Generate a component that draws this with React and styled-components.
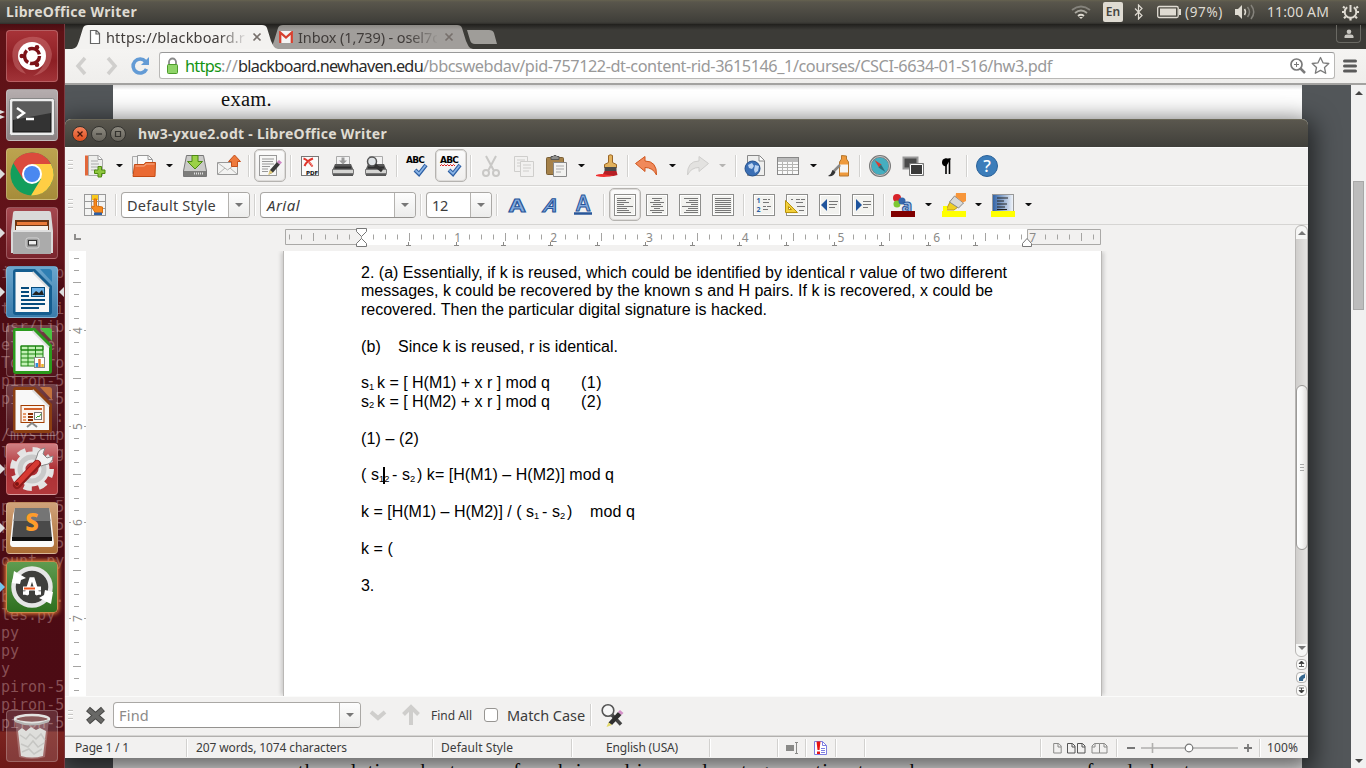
import React, { useLayoutEffect, useRef } from "react";
import styled, { createGlobalStyle, css } from "styled-components";

const GlobalStyle = createGlobalStyle`
  * { box-sizing: border-box; }
  html, body { margin: 0; padding: 0; }
  body { overflow: hidden; font-family: "Noto Sans", "Open Sans", sans-serif; color: #3c3c3c; }
  svg { display: block; flex: none; }
`;

/* Text whose tracking is adjusted so that it fills a given width. */
const FitBox = styled.span`
  display: block;
  flex: none;
  white-space: pre;
  width: ${(p) => p.$w}px;
  margin-left: ${(p) => p.$ml || 0}px;
  font-size: ${(p) => p.$size}px;
  font-weight: ${(p) => p.$weight || 400};
  font-style: ${(p) => (p.$italic ? "italic" : "normal")};
  color: ${(p) => p.$color || "inherit"};
`;
function Fit({ w, ml, size, weight, italic, color, children }) {
  const ref = useRef(null);
  useLayoutEffect(() => {
    const el = ref.current;
    el.style.letterSpacing = "0px";
    const n = el.textContent.length;
    if (n > 1) el.style.letterSpacing = `${(w - el.getBoundingClientRect().width) / n}px`;
  }, [w]);
  return (
    <FitBox $w={w} $ml={ml} $size={size} $weight={weight} $italic={italic} $color={color}>
      <span ref={ref}>{children}</span>
    </FitBox>
  );
}

/* ---------- screen ---------- */
const Screen = styled.div`
  position: relative;
  width: 1366px;
  height: 768px;
  overflow: hidden;
  display: flex;
  flex-direction: column;
  background: #3c3b37;
`;
const Panel = styled.header`
  position: relative;
  z-index: 5;
  height: 24px;
  flex: none;
  display: flex;
  align-items: center;
  padding-left: 6px;
  background: linear-gradient(#66624f 0, #59564c 2px, #3f3e39 22px, #2f2e2a 24px);
  color: #dfdbd2;
  line-height: 20px;
`;
const Tray = styled.div`
  display: flex;
  align-items: center;
  margin-left: auto;
  padding-right: 7px;
`;
const LangBadge = styled.span`
  width: 20px;
  height: 20px;
  margin: 0 11px 0 12px;
  border-radius: 2px;
  background: #dfdbd2;
  color: #45443f;
  font: 600 12px/20px "Noto Sans", sans-serif;
  text-align: center;
`;
const Body = styled.div`
  display: flex;
  flex: 1;
  min-height: 0;
`;

/* ---------- launcher ---------- */
const LauncherBar = styled.nav`
  position: relative;
  z-index: 4;
  width: 65px;
  flex: none;
  overflow: hidden;
  display: flex;
  flex-direction: column;
  gap: 7px;
  padding: 6px 0 0 6px;
  border-right: 1px solid #7b3a40;
  background: linear-gradient(#4a0d12 0, #5f1216 8px, #62131a 235px, #4d0c14 262px, #4c0b14 705px, #521016 707px, #7b231f 708px, #6d1a18 744px);
`;
const Ghost = styled.pre`
  position: absolute;
  left: 1px;
  top: 240px;
  margin: 0;
  font: 15px/18px "DejaVu Sans Mono", monospace;
  color: #885055;
`;
const Tile = styled.div`
  position: relative;
  width: 52px;
  height: 52px;
  flex: none;
  display: grid;
  place-items: center;
  border-radius: 4px;
  border: 1px solid rgba(255, 255, 255, 0.22);
  background: ${(p) => p.$bg};
  ${(p) => p.$push && css`margin-top: auto; margin-bottom: 6px;`}
  ${(p) => p.$glow && css`box-shadow: 0 0 4px 1px #e8843c; border-color: #d08a4c;`}
`;
const Pip = styled.i`
  position: absolute;
  left: ${(p) => (p.$right ? "52px" : "-7px")};
  top: ${(p) => p.$top || 20}px;
  border: solid transparent;
  border-width: ${(p) => (p.$thin ? "2px" : "5px")};
  ${(p) => (p.$right ? css`border-right-color: #ddd; border-left-width: 0;` : css`border-left: 5px solid ${p.$color || "#ddd"}; border-right-width: 0;`)}
`;

/* ---------- browser ---------- */
const Desktop = styled.main`
  position: relative;
  flex: 1;
  min-width: 0;
  display: flex;
  flex-direction: column;
`;
const TabStrip = styled.div`
  height: 25px;
  flex: none;
  display: flex;
  padding-left: 7px;
  background: linear-gradient(#201f1c, #3c3b37 6px, #3c3b37);
`;
const Tab = styled.div`
  width: 206px;
  height: 25px;
  flex: none;
  display: flex;
  align-items: center;
  padding-left: 16px;
  margin-left: ${(p) => (p.$active ? 0 : -11)}px;
  clip-path: path("M0 25 C5 24 5 22 7 17 L11 4 Q12 1 16 1 L190 1 Q194 1 195 4 L199 17 C202 23 202 24 206 25 Z");
  background: ${(p) => (p.$active ? "#f3f2f0" : "linear-gradient(#86847f, #a19e9b 6px)")};
  ${(p) => p.$active && css`position: relative; z-index: 1;`}
`;
const TabTitle = styled.div`
  width: 140px;
  margin-left: 4px;
  overflow: hidden;
  mask-image: linear-gradient(90deg, #000 112px, transparent 142px);
  color: #403c3a;
`;
const NewTab = styled.div`
  width: 30px;
  height: 14px;
  margin: 6px 0 0 -6px;
  background: #9f9d99;
  clip-path: path("M0 0 L22 0 Q26 0 27 3 L30 14 L8 14 Q4 14 3 10 Z");
`;
const UserButton = styled.div`
  width: 25px;
  height: 18px;
  margin: 1px 5px 0 auto;
  display: grid;
  place-items: center;
  border: 1px solid #6a6963;
  border-top: 0;
  border-radius: 0 0 4px 4px;
`;
const NavBar = styled.div`
  height: 36px;
  flex: none;
  display: flex;
  align-items: center;
  padding: 0 7px 1px 9px;
  background: linear-gradient(#f5f4f2, #efeeec);
  border-bottom: 2px solid #a3a2a0;
`;
const UrlBox = styled.div`
  width: 1176px;
  height: 27px;
  margin-left: 8px;
  padding: 0 5px 0 6px;
  display: flex;
  align-items: center;
  border: 1px solid #b9b8b6;
  border-top-color: #999;
  border-radius: 3px;
  background: #fff;
`;
const Viewer = styled.div`
  flex: 1;
  min-height: 0;
  display: flex;
  background: #525659;
`;
const PdfPage = styled.div`
  width: 1189px;
  margin-left: 48px;
  padding: 3px 0 0 108px;
  display: flex;
  flex-direction: column;
  justify-content: space-between;
  overflow: hidden;
  background: linear-gradient(#ddd, #fff 5px);
  font-family: "Liberation Serif", serif;
  color: #111;
  line-height: 22px;
`;
const PdfLine = styled.div`
  height: ${(p) => p.$h}px;
  padding-left: ${(p) => p.$pl || 0}px;
`;
const BrowserScroll = styled.div`
  width: 15px;
  margin-left: auto;
  padding: 6px 0 5px;
  display: flex;
  flex-direction: column;
  align-items: center;
  justify-content: space-between;
  background: #f1f1f1;
`;
const BrowserThumb = styled.div`
  width: 11px;
  height: 129px;
  margin-bottom: 363px;
  border: 1px solid #a8a8a8;
  background: #bcbcbc;
`;
const Caret = styled.i`
  border: solid transparent;
  border-width: 0 4px;
  ${(p) => (p.$up ? css`border-bottom: 4px solid ${p.$color || "#444"};` : css`border-top: 4px solid ${p.$color || "#444"};`)}
`;

/* ---------- writer window ---------- */
const Window = styled.section`
  position: absolute;
  z-index: 2;
  left: 0;
  top: 95px;
  width: 1243px;
  height: 639px;
  display: flex;
  flex-direction: column;
  border-radius: 6px 6px 0 0;
  background: #f2f1f0;
  box-shadow: 0 7px 24px 6px rgba(0, 0, 0, 0.6);
`;
const TitleBar = styled.div`
  height: 28px;
  flex: none;
  display: flex;
  align-items: center;
  padding-left: 7px;
  border-radius: 6px 6px 0 0;
  border-top: 1px solid #6a6758;
  background: linear-gradient(#5a574e, #403f3a);
  color: #dfdbd2;
`;
const WinButton = styled.span`
  width: 16px;
  height: 16px;
  margin-right: 3px;
  display: grid;
  place-items: center;
  border-radius: 50%;
  border: 1px solid #34332f;
  background: ${(p) => (p.$close ? "linear-gradient(#f4835c, #df4f1f)" : "linear-gradient(#8d8a80, #66635b)")};
`;
const Toolbar = styled.div`
  height: ${(p) => p.$h}px;
  flex: none;
  display: flex;
  align-items: center;
  padding-bottom: 2px;
  border-bottom: 1px solid #d6d5d3;
  border-top: 1px solid #fbfbfa;
`;
const Slot = styled.span`
  flex: none;
  margin-left: ${(p) => p.$ml}px;
  display: block;
`;
const Grip = styled.span`
  width: 5px;
  height: 11px;
  margin-left: 3px;
  background: repeating-linear-gradient(#c6c5c3 0 1px, #fff 1px 2px, transparent 2px 4px);
`;
const Sep = styled.span`
  width: 2px;
  height: ${(p) => p.$h || 22}px;
  flex: none;
  margin-left: ${(p) => p.$ml}px;
  border-left: 1px solid #d2d1cf;
  border-right: 1px solid #fff;
`;
const Drop = styled.i`
  flex: none;
  width: 7px;
  margin-left: ${(p) => p.$ml}px;
  border: solid transparent;
  border-width: 0 3px;
  border-top: 3px solid ${(p) => (p.$off ? "#b5b4b2" : "#111")};
`;
const Pressed = styled.span`
  width: 32px;
  height: 33px;
  flex: none;
  margin-left: ${(p) => p.$ml}px;
  display: grid;
  place-items: center;
  border: 1px solid #b5b3b0;
  border-radius: 5px;
  background: linear-gradient(#fbfbfb, #f0efee);
  box-shadow: inset 0 0 0 1px #dddbd9;
`;
const Combo = styled.div`
  width: ${(p) => p.$w}px;
  height: 26px;
  flex: none;
  margin-left: ${(p) => p.$ml}px;
  display: flex;
  align-items: center;
  padding-left: 5px;
  border: 1px solid #aaa8a5;
  border-bottom-color: #94928f;
  border-radius: 4px;
  background: #fff;
`;
const ComboButton = styled.span`
  width: 21px;
  align-self: stretch;
  margin-left: auto;
  display: grid;
  place-items: center;
  border-left: 1px solid #b4b2af;
  border-radius: 0 3px 3px 0;
  background: linear-gradient(#fdfdfd, #ececeb);
`;
const RulerRow = styled.div`
  height: 26px;
  flex: none;
  display: flex;
`;
const RulerPad = styled.div`
  padding-top: 3px;
`;
const Corner = styled.i`
  width: 7px;
  height: 6px;
  margin: 9px 0 0 9px;
  border: solid #8f8e8c;
  border-width: 0 0 2px 2px;
`;
const Workspace = styled.div`
  position: relative;
  flex: 1;
  min-height: 0;
  display: flex;
  flex-direction: column;
`;
const Canvas = styled.div`
  flex: 1;
  min-height: 0;
  display: flex;
  padding-left: 4px;
`;
const Page = styled.article`
  position: relative;
  width: 819px;
  margin-left: 197px;
  padding: 13px 0 0 77px;
  border-left: 1px solid #bab8b6;
  border-right: 1px solid #bab8b6;
  background: #fff;
  box-shadow: 3px 0 4px -1px rgba(0, 0, 0, 0.16), -3px 0 4px -1px rgba(0, 0, 0, 0.16);
  clip-path: inset(0 -6px);
  font-family: "Liberation Sans", Arial, sans-serif;
  font-size: 16px;
  color: #000;
`;
const Line = styled.div`
  height: 18.4px;
  line-height: 18.4px;
  display: flex;
  margin-bottom: ${(p) => (p.$gap ? 18.4 : 0)}px;
`;
const Sub = styled.span`
  width: ${(p) => p.$w}px;
  flex: none;
  padding-top: 3.5px;
  font-size: 9.3px;
  white-space: pre;
`;
const TextCursor = styled.i`
  position: absolute;
  left: 99px;
  top: 216px;
  width: 2px;
  height: 17px;
  background: #000;
`;
const ScrollColumn = styled.div`
  position: absolute;
  right: 0;
  top: 0;
  width: 13px;
  display: flex;
  flex-direction: column;
  align-items: center;
  gap: 2px;
`;
const ScrollTrack = styled.div`
  width: 13px;
  height: 432px;
  padding: 5px 0 6px;
  display: flex;
  flex-direction: column;
  align-items: center;
  justify-content: space-between;
  border: 1px solid #b8b6b4;
  border-radius: 6px;
  background: linear-gradient(#f6f6f5 0 13px, transparent 13px 418px, #f6f6f5 418px), linear-gradient(90deg, #cfcdcb, #e4e3e1);
`;
const ScrollThumb = styled.div`
  width: 12px;
  height: 165px;
  margin-top: 54px;
  display: grid;
  place-items: center;
  border: 1px solid #9c9a98;
  border-radius: 6px;
  background: linear-gradient(90deg, #fff, #f5f5f4 50%, #dedcda);
`;
const ThumbGrip = styled.i`
  width: 4px;
  height: 7px;
  background: repeating-linear-gradient(#aaa 0 1px, transparent 1px 3px);
`;
const RoundButton = styled.span`
  width: 11px;
  height: 11px;
  display: grid;
  place-items: center;
  border: 1px solid #b3b1af;
  border-radius: 4px;
  background: #fbfbfa;
`;
const Check = styled.span`
  width: 14px;
  height: 14px;
  margin-left: 12px;
  border: 1px solid #979592;
  border-radius: 3px;
  background: #fff;
`;
const StatusBar = styled.div`
  height: 22px;
  flex: none;
  display: flex;
  align-items: center;
  border-top: 1px solid #b2b0ae;
  color: #3c3c3c;
`;

/* ---------- drawings ---------- */
const Svg = ({ s = 24, h, vb, children }) => (
  <svg width={s} height={h || s} viewBox={vb || `0 0 ${s} ${h || s}`} fill="none">{children}</svg>
);
const Tick = () => <path d="M10 16l4 4L21 11" stroke="#2d5fa4" strokeWidth="4" />;
const TickIn = () => <path d="M10.5 16.3l3.5 3.4L20.5 11.5" stroke="#8ab4e6" strokeWidth="1.8" />;
const AbcText = styled.text`
  font: bold 9px "DejaVu Sans", sans-serif;
  letter-spacing: -0.8px;
  fill: #000;
`;
const Pencil = () => (
  <g>
    <path d="M12 16l7-8 3 2.500-7 8-4 2z" fill="#3a3a3a" />
    <path d="M12 16l-2 5 5-2.500z" fill="#e3cd7b" />
    <path d="M19 8l2-2 3 2.500-2 2z" fill="#cf86c4" />
  </g>
);
const PrinterBase = () => (
  <g>
    <path d="M5.500 2.500h13v9h-13z" fill="#f2f2f2" stroke="#aaa" />
    <path d="M4 10h16l2.500 6v5h-21v-5z" fill="#5a5a5a" />
    <path d="M1.500 15.500h21v4h-21z" fill="#d5d5d3" stroke="#777" />
    <path d="M4 13.500h16" stroke="#2f2f2f" strokeWidth="2" />
    <path d="M2 21.500h20" stroke="#555" />
  </g>
);

const icons = {
  newDoc: (
    <>
      <path d="M2 1.500h4v20H2z" fill="#e2673a" />
      <path d="M5.500 1.500h10l4 4v16h-14z" fill="#eeeeec" stroke="#aaa" />
      <path d="M15 1.500v4h4" stroke="#999" fill="#fff" />
      <path d="M8 7h7M8 10h8M8 13h7M8 16h5" stroke="#aaa" />
      <path d="M15 12.500h3.500v3.500h3.500v3.500h-3.500V23H15v-3.500h-3.500V16H15z" fill="#8ec63f" stroke="#4f8a10" />
    </>
  ),
  open: (
    <>
      <path d="M.5 2.500h7l2 3v14h-9z" fill="#efefef" stroke="#aaa" />
      <path d="M5.500 1.500h11l4 4v7h-15z" fill="#fafafa" stroke="#999" />
      <path d="M16 1.500v4h4" stroke="#999" />
      <path d="M1 22.500L2.500 10.500H12l1.500-2H23.500l-.5 14z" fill="#ea6a33" stroke="#c44b14" />
      <path d="M3.500 12h9l1.500-2h8.500" stroke="#f7b08d" />
    </>
  ),
  save: (
    <>
      <path d="M3.500 1.500h17l3 15.500v5.500h-23V17z" fill="#cbcbc9" stroke="#777" />
      <path d="M1 17h22v5H1z" fill="#7d7d7b" />
      <path d="M11 19.500h9" stroke="#e0e0e0" strokeWidth="2" strokeDasharray="1 1" />
      <path d="M9 1.500h6v6h4.500L12 15 4.500 7.500H9z" fill="#9bd146" stroke="#4c8913" />
    </>
  ),
  mail: (
    <>
      <path d="M.5 8.500h20v12h-20z" fill="#f3f3f2" stroke="#999" />
      <path d="M1 9l9.500 7L20 9M1 20l7-6M20 20l-7-6" stroke="#b5b5b3" />
      <path d="M14.500 12.500V7.500h-3l6-6.500 6 6.500h-3v5z" fill="#ee7a3d" stroke="#c4511c" />
    </>
  ),
  edit: (
    <>
      <rect x="1.500" y="1.500" width="17" height="20" fill="#f7f7f6" stroke="#999" />
      <path d="M4 5h12M4 7.500h11M4 10h12M4 12.500h8M4 15h6M4 17.500h6" stroke="#999" />
      <Pencil />
    </>
  ),
  pdf: (
    <>
      <rect x="3.500" y="2.500" width="17" height="19" fill="#fbfbfb" stroke="#777" />
      <path d="M5.500 4.500q4 1 9 8M15 4.500Q9 6.500 6.500 12" stroke="#e0352c" strokeWidth="2" />
      <path d="M10 8q4 1 4.500 5" stroke="#f08a84" />
      <text x="8" y="20.500" fontFamily="DejaVu Sans" fontWeight="bold" fontSize="5.500" fill="#111">PDF</text>
    </>
  ),
  print: (
    <>
      <PrinterBase />
      <path d="M10.500 3.500h3v3h2.500l-4 4-4-4h2.500z" fill="#9b9b9b" />
    </>
  ),
  preview: (
    <>
      <PrinterBase />
      <circle cx="8" cy="7.500" r="4.500" fill="#dfe3e6" stroke="#555" strokeWidth="1.500" />
      <path d="M11 11l7 6" stroke="#333" strokeWidth="3" />
    </>
  ),
  spell: (
    <>
      <AbcText x="1" y="9">ABC</AbcText>
      <Tick />
      <TickIn />
    </>
  ),
  autoSpell: (
    <>
      <AbcText x="1" y="9">ABC</AbcText>
      <path d="M1 12l1.500-1.500L4 12l1.500-1.500L7 12l1.500-1.500L10 12l1.500-1.500L13 12l1.500-1.500L16 12" stroke="#e02020" />
      <Tick />
      <TickIn />
    </>
  ),
  cut: (
    <g stroke="#c9c8c6" strokeWidth="2">
      <path d="M7 2l7.500 14M17 2L9.500 16" />
      <circle cx="7" cy="19" r="3" />
      <circle cx="17" cy="19" r="3" />
    </g>
  ),
  copy: (
    <g stroke="#cfcecc" fill="#f2f1f0">
      <path d="M2.500 2.500h13v15h-13zM5 6h8M5 9h8M5 12h6" />
      <path d="M8.500 7.500h13v15h-13zM11 11h8M11 14h8M11 17h6" />
    </g>
  ),
  paste: (
    <>
      <rect x="2.500" y="3.500" width="17" height="17" rx="1" fill="#a58149" stroke="#7b6036" />
      <path d="M7 5.500v-3h2l1-1h2l1 1h2v3z" fill="#8d8d8b" stroke="#555" />
      <path d="M9.500 8.500h13v14h-13z" fill="#f2f2f0" stroke="#888" />
      <path d="M12 12h8M12 15h8M12 18h5" stroke="#aaa" />
    </>
  ),
  brush: (
    <>
      <path d="M13.500 1.500q2-1.500 4 0v7l4 2v3h-12v-3l4-2z" fill="#e3b25c" stroke="#9a6526" />
      <path d="M9.500 13h12v4h-12z" fill="#4a4a4a" />
      <path d="M9.500 17h12l1 4q-8 2.500-15 0z" fill="#b51f25" />
      <path d="M1 21q5-2 12 0l6 .500Q10 24 1 22z" fill="#f03030" />
    </>
  ),
  undo: (
    <path d="M1.500 9.500L11 2.500v4.500q12 0 11.500 14Q19 13.500 11 13.500v4z" fill="#f0895a" stroke="#d0571e" strokeLinejoin="round" />
  ),
  redo: (
    <path d="M22.500 9.500L13 2.500v4.500Q1 7 1.500 21 5 13.500 13 13.500v4z" fill="#e3e2e0" stroke="#cfcecc" strokeLinejoin="round" />
  ),
  link: (
    <>
      <path d="M4.500 1.500h12l5 5v15h-17z" fill="#efefee" stroke="#888" />
      <path d="M16 2v5h5" stroke="#888" fill="#fff" />
      <circle cx="9.500" cy="14.500" r="7.500" fill="#3b6fb5" stroke="#24508c" />
      <path d="M5 11l4-2 2 3-2 3-3-1zM12 11l4 1-1 5-3 2-1-3z" fill="#bcd4f2" />
    </>
  ),
  table: (
    <>
      <rect x="1.500" y="3.500" width="21" height="17" fill="#fafafa" stroke="#888" />
      <path d="M2 6h20" stroke="#bbb" strokeWidth="4" />
      <path d="M2 10.500h20M2 13.500h20M2 16.500h20M6.500 8v12M11.500 8v12M16.500 8v12" stroke="#b5b5b3" />
    </>
  ),
  draw: (
    <>
      <path d="M14.500 1.500l5 .5v3l2 3v14h-9V8l2-3z" fill="#ef9a3c" stroke="#b5772e" />
      <path d="M13 10.500h8v8h-8z" fill="#f5f5f5" />
      <path d="M6 18l7-7" stroke="#888" strokeWidth="2.500" />
      <path d="M1 22q5 1.500 7.500-4l-3-2q-1 4-4.500 6z" fill="#333" />
    </>
  ),
  navigator: (
    <>
      <circle cx="12" cy="12" r="9.800" fill="#45aec0" stroke="#777" strokeWidth="2.400" />
      <circle cx="12" cy="12" r="9.500" stroke="#c9c9c9" strokeWidth="1" />
      <path d="M6.500 6l7 4.500-2.500 3z" fill="#dc3a30" />
      <path d="M17.500 18l-7-4.500 2.500-3z" fill="#2a6f7d" />
    </>
  ),
  gallery: (
    <>
      <path d="M2.500 3.500h14v11h-14z" fill="#4a4a4a" stroke="#999" strokeWidth="2" />
      <path d="M8.500 9.500h14v12h-14z" fill="#3a3a3a" stroke="#777" />
      <path d="M9.500 10.500h12v10h-12z" stroke="#fff" />
    </>
  ),
  pilcrow: (
    <>
      <path d="M12 4.500v15.500M15.500 4.500v15.500" stroke="#000" strokeWidth="1.600" />
      <path d="M17 4.500h-6q-3 .500-3 4t4 4z" fill="#000" />
    </>
  ),
  help: (
    <>
      <circle cx="12" cy="12" r="10.500" fill="#3c7dba" stroke="#2b6299" />
      <text x="12" y="18" textAnchor="middle" fontFamily="Noto Sans" fontWeight="500" fontSize="17" fill="#fff">?</text>
    </>
  ),
  styles: (
    <>
      <rect x="1.500" y="1.500" width="21" height="21" fill="#f4f4f3" stroke="#999" />
      <path d="M8.500 2v20M15.500 2v20M2 8.500h20M2 15.500h20" stroke="#999" />
      <path d="M9 2h6v5H9z" fill="#f8c81c" />
      <path d="M11 6h2.500v7l6 1v6h-7l-4-6 1-1 1.500 1z" fill="#f58a1f" stroke="#d96d0c" />
      <path d="M11 19.500h8v2.500h-8z" fill="#2d5fa4" />
    </>
  ),
  bold: (
    <g transform="translate(12 18.500) scale(1.3 1)">
      <text textAnchor="middle" fontFamily="Noto Sans" fontWeight="700" fontSize="18.500" fill="#85acdf" stroke="#28569a">A</text>
    </g>
  ),
  italic: (
    <g transform="translate(12 18.500) scale(1.200 1) skewX(-6)">
      <text textAnchor="middle" fontFamily="Noto Sans" fontWeight="600" fontStyle="italic" fontSize="18.500" fill="#85acdf" stroke="#28569a">A</text>
    </g>
  ),
  underline: (
    <>
      <text x="12" y="17.500" textAnchor="middle" fontFamily="Noto Sans" fontWeight="600" fontSize="21" fill="#85acdf" stroke="#28569a" strokeWidth="1">A</text>
      <path d="M3 20.500h18" stroke="#28569a" strokeWidth="2.500" />
    </>
  ),
  fontColor: (
    <>
      <circle cx="6" cy="5" r="4" fill="#d8232a" />
      <circle cx="6" cy="11" r="3.500" fill="#7dc832" />
      <circle cx="11" cy="8" r="3.500" fill="#3566ac" />
      <text x="16" y="19" textAnchor="middle" fontFamily="Noto Sans" fontWeight="800" fontSize="17" fill="#9abbe5" stroke="#28569a">a</text>
      <path d="M0 18h24v6H0z" fill="#800000" />
    </>
  ),
  highlight: (
    <>
      <path d="M4 17l4-8 8 5-4 3z" fill="#f0cf22" stroke="#bd9b10" />
      <path d="M7.500 9l5-6 9 7-5 5z" fill="#d9d9d7" stroke="#888" />
      <path d="M14 0h10v8l-3 1.500-7.500-6z" fill="#f7963b" />
      <path d="M1 13h4v5H1zM0 18h24v6H0z" fill="#ffff00" />
    </>
  ),
  paraBg: (
    <>
      <defs>
        <linearGradient id="pb"><stop stopColor="#2d5fa4" /><stop offset="1" stopColor="#f4f7fb" /></linearGradient>
      </defs>
      <rect x="1.500" y="1.500" width="21" height="20" fill="url(#pb)" stroke="#999" />
      <path d="M6 5h11M6 8h7M6 11h10M6 14h8M6 16.500h10" stroke="#222" />
      <path d="M0 18h24v6H0z" fill="#ffff00" />
    </>
  ),
  find: (
    <>
      <path d="M12 12l9 9.500" stroke="#444" strokeWidth="3.500" />
      <circle cx="8" cy="7.500" r="5.800" stroke="#555" strokeWidth="1.600" fill="#f7f7f7" />
      <path d="M8.500 19.500L18 9l3.500 3L12 22z" fill="#2f2f2f" />
      <path d="M8.500 19.500L6.500 24l5.500-2z" fill="#e3d96b" />
      <path d="M18 9l2-2 3.500 3-2 2z" fill="#d390c8" />
    </>
  ),
};

const AlignFrame = ({ d, children }) => (
  <Svg>
    <rect x="1.500" y="1.500" width="21" height="21" fill="#f2f2ef" stroke="#8e8e8c" />
    <rect x="2.500" y="2.500" width="19" height="19" stroke="#fff" />
    <path d={d} stroke="#777" />
    {children}
  </Svg>
);
const rows = (spans) => spans.map(([x, w], i) => `M${x} ${5.5 + i * 2}h${w}`).join("");
const alignLeft = rows([[4, 14], [4, 9], [4, 12], [4, 7], [4, 16], [4, 10], [4, 12], [4, 14]]);
const alignCenter = rows([[7, 10], [9, 6], [5, 14], [8, 8], [6, 12], [9, 6], [5, 14], [7, 10]]);
const alignRight = rows([[6, 14], [11, 9], [8, 12], [13, 7], [4, 16], [10, 10], [8, 12], [6, 14]]);
const alignFull = rows([[4, 16], [4, 16], [4, 16], [4, 16], [4, 16], [4, 16], [4, 16], [4, 16]]);

const Icon = ({ name, ml = 0 }) => (
  <Slot $ml={ml}><Svg>{icons[name]}</Svg></Slot>
);

/* ---------- launcher drawings ---------- */
const OfficeDoc = ({ c, c2, children }) => (
  <Svg s={42} h={50}>
    <path d="M2 5q0-3 3-3h19l17 17v26q0 3-3 3H5q-3 0-3-3z" fill={c} />
    <path d="M29 2h9q3 0 3 3v10z" fill={c2} />
    <path d="M4.500 5h17L38 21.500V45h-33.500z" fill="#f8f8f8" />
    <path d="M21.500 5L38 21.500" stroke="#ddd" strokeWidth="2" />
    {children}
  </Svg>
);
const launcherArt = {
  dash: (
    <Svg s={50}>
      <path d="M6 30Q2 10 22 6q20-2 23 17-1 18-19 22Q41 36 37 19 26 8 12 19 8 31 19 43 8 40 6 30z" fill="#d88484" opacity=".4" />
      <circle cx="25" cy="25" r="14" fill="#fff" />
      <circle cx="25" cy="25" r="7.500" stroke="#7c1218" strokeWidth="3.400" strokeDasharray="13.700 2" />
      <circle cx="14.800" cy="25" r="2.300" fill="#7c1218" />
      <circle cx="30" cy="16.300" r="2.300" fill="#7c1218" />
      <circle cx="30" cy="33.700" r="2.300" fill="#7c1218" />
    </Svg>
  ),
  terminal: (
    <Svg s={50}>
      <rect x="2.500" y="8.500" width="45" height="37" rx="2" fill="#ececec" stroke="#888" />
      <rect x="6" y="12" width="38" height="30" fill="#333" stroke="#111" />
      <path d="M6 12h38v11L6 30z" fill="#5b5b5b" />
      <path d="M10 18l7 5-7 5M19 29h8" stroke="#fff" strokeWidth="2.400" />
    </Svg>
  ),
  chrome: (
    <Svg s={50}>
      <circle cx="25" cy="25" r="21.500" fill="#129e5c" />
      <path d="M25 15h19a21.500 21.500 0 0 1-20 31.500L34 30z" fill="#ffce44" />
      <path d="M25 15h19A21.500 21.500 0 0 0 6.400 14.300L16 30z" fill="#db4a3c" />
      <circle cx="25" cy="25" r="10" fill="#fff" />
      <circle cx="25" cy="25" r="8" fill="#4a88f0" />
    </Svg>
  ),
  files: (
    <Svg s={50}>
      <path d="M6 5q0-2 2-2h34q2 0 2 2l2 18v22H4V23z" fill="#d9d9d9" />
      <path d="M8 12h34v14H8z" fill="#6b3512" />
      <path d="M10 14h30v3H10z" fill="#e97a37" />
      <path d="M9 18h32v4H9z" fill="#f5f0e8" />
      <path d="M9 22h32v3H9z" fill="#e97a37" />
      <path d="M6 22h38v24H6z" fill="#ababab" />
      <path d="M6 22h38v2H6z" fill="#dedede" />
      <rect x="19" y="30" width="13" height="10" rx="2" fill="#999" stroke="#d5d5d5" />
      <rect x="21.500" y="32.500" width="8" height="4.500" fill="#eee" stroke="#333" />
    </Svg>
  ),
  writer: (
    <OfficeDoc c="#155d8f" c2="#2f7fb3">
      <path d="M10 21h8M10 25h8M10 29h8M10 33h24M10 37h24M10 41h18" stroke="#064b7c" strokeWidth="2" />
      <rect x="20.500" y="20.500" width="13" height="9" fill="#6db3ea" stroke="#064b7c" />
      <path d="M21 28l4-4 3 2 3-3 2 5z" fill="#222" />
    </OfficeDoc>
  ),
  calc: (
    <OfficeDoc c="#2b9a1d" c2="#4ac243">
      <rect x="10" y="20" width="22" height="20" fill="#c2f0b4" stroke="#1c8410" />
      <path d="M10 20h22v4H10zM10 24h22M10 28h22M10 32h22M10 36h22M17 20v20M24.500 20v20" stroke="#1c8410" />
      <rect x="23.500" y="31.500" width="10" height="10" fill="#fff" stroke="#888" />
      <path d="M28.500 41v-8" stroke="#e3762c" strokeWidth="2.500" />
      <path d="M25.800 41v-4" stroke="#2a8fdb" strokeWidth="2.500" />
      <path d="M31.500 41v-3" stroke="#e8b52a" strokeWidth="2.500" />
    </OfficeDoc>
  ),
  impress: (
    <OfficeDoc c="#8c3f12" c2="#c2723e">
      <rect x="10" y="20.500" width="23" height="17" fill="#fdf4ec" stroke="#a33e03" />
      <path d="M13 24h18" stroke="#d2622a" strokeWidth="2" />
      <path d="M12 29h3M12 32h3M12 35h3" stroke="#e79868" strokeWidth="2" />
      <path d="M17 29h5M17 32h5M17 35h5" stroke="#8c2f02" strokeWidth="2" />
      <rect x="23.500" y="27.500" width="7" height="7" fill="#fff" stroke="#777" />
      <path d="M25 33l2-2 1 1 2-3" stroke="#38a12a" />
      <path d="M16 42l5-4 5 4" stroke="#888" strokeWidth="2" />
    </OfficeDoc>
  ),
  settings: (
    <Svg s={50}>
      <circle cx="25" cy="25" r="19" stroke="#e3e3e3" strokeWidth="6" strokeDasharray="8 6.920" />
      <circle cx="25" cy="25" r="12" stroke="#e6e6e6" strokeWidth="11" />
      <circle cx="25" cy="25" r="12" stroke="#c9c9c9" strokeWidth="5" />
      <path d="M30 12q1-7 8-8l-2 6 4 4 6-2q0 8-9 9L34 22 28 17z" fill="#f2f2f2" stroke="#888" />
      <path d="M30 20L10 41" stroke="#8f1b1b" strokeWidth="8" strokeLinecap="round" />
      <path d="M30 19L10 40" stroke="#d63a33" strokeWidth="5" strokeLinecap="round" />
      <circle cx="10" cy="40" r="2" fill="#7b1513" />
    </Svg>
  ),
  sublime: (
    <Svg s={50}>
      <path d="M6 12l2-7h34l2 7 3 28q0 4-3 4H6q-3 0-3-4z" fill="#fafafa" />
      <path d="M8 5h34l3 31H5z" fill="#4a4a4a" />
      <path d="M8 5h34l1.500 13h-37z" fill="#757575" />
      <path d="M5 34h40v4H5z" fill="#111" />
      <text x="25" y="28" textAnchor="middle" fontFamily="Noto Sans" fontWeight="800" fontSize="24" fill="#ff9c2a">S</text>
    </Svg>
  ),
  updater: (
    <Svg s={50}>
      <circle cx="25" cy="25" r="18.500" fill="#3f3f3c" stroke="#e6e6e6" strokeWidth="4.500" />
      <path d="M5 21l2-12 12 7-5 2-1 4z" fill="#fff" />
      <path d="M46 30l-2 12-12-6 5-3 1-5z" fill="#fff" />
      <path d="M19 33l5-16h2l5 16M16 31h6M28 31h6" stroke="#fff" strokeWidth="3.600" />
      <path d="M16 26.500h18" stroke="#fff" strokeWidth="4" />
      <path d="M17 26.500h11" stroke="#f0551d" strokeWidth="2" />
    </Svg>
  ),
  trash: (
    <Svg s={50}>
      <path d="M8 8l4 38q13 4 26 0l4-38z" fill="#e8d8d8" opacity=".3" />
      <path d="M11 20l4-3 4 3 5-4 5 3 4-2 6 3-3 25q-11 3-22 0z" fill="#dededb" />
      <path d="M13 24l6 4 4-5 6 5 5-5 4 6M14 33l7 3 5-6 5 6 6-4M15 41l7-3 5 5 8-5" stroke="#c6c6c3" strokeWidth="1.500" />
      <ellipse cx="25" cy="8" rx="17" ry="4" stroke="#e3e3e1" strokeWidth="2.600" fill="#8a5b5b" />
      <path d="M8 10q17 7 34 0" stroke="#b5b5b3" strokeWidth="2" />
    </Svg>
  ),
};
const launcherItems = [
  { art: "dash", bg: "linear-gradient(#a73338, #8d1f24 60%, #a13338)" },
  { art: "terminal", bg: "linear-gradient(#b5adae, #8b8283)", double: true },
  { art: "chrome", bg: "linear-gradient(#bca34f, #a68c3a)", pip: true },
  { art: "files", bg: "linear-gradient(#a5484f, #7a252d)", pip: true },
  { art: "writer", bg: "linear-gradient(#6ba6cd, #3b7cab)", pip: true, active: true },
  { art: "calc", bg: "linear-gradient(rgba(255,255,255,.22), rgba(255,255,255,.04))" },
  { art: "impress", bg: "linear-gradient(rgba(255,255,255,.22), rgba(255,255,255,.04))" },
  { art: "settings", bg: "linear-gradient(#d08083, #ae3035 50%, #b2383b)", pip: true },
  { art: "sublime", bg: "linear-gradient(#cfa27a, #ad6e35)", pip: true },
  { art: "updater", bg: "linear-gradient(#5f9b50, #2f701f)", pip: true, pipColor: "#72c5f0", glow: true },
  { art: "trash", bg: "rgba(255,255,255,.14)", push: true },
];
const ghostText = [
  "i     p", "", "t     i", "usr/lib", "et/are,", "To  pro", "piron-5", "pi   -5", "      :", "/mystmp", "l     g", "t      ",
  "      _", "piron-5", "p    -5", "p    -5", "ount.py", "", "b     .", "les.py", "py", "py", "y", "piron-5", "piron-5", "piron-5",
].join("\n");

/* ---------- rulers ---------- */
const TickLabel = styled.text`
  font: 12px "Noto Sans", sans-serif;
  fill: #8b8a88;
  text-anchor: middle;
`;
function HorizontalRuler() {
  const ticks = [];
  for (let i = -6; i <= 61; i++) {
    if (i !== 0 && i % 8 !== 0) ticks.push(`M${76.5 + i * 12} ${i % 4 === 0 ? 5 : 6.5}v${i % 4 === 0 ? 8 : 5}`);
  }
  const stops = [];
  for (let i = 1; i < 14; i++) stops.push(`M${Math.round(76 + i * 47.25) + 0.5} 14v3M${Math.round(76 + i * 47.25) - 2} 17.5h5`);
  return (
    <Svg s={818} h={22}>
      <path d="M77 1h665v16H77z" fill="#fff" />
      <path d="M.5 1.500h76v15H.5zM742.500 1.500h73v15h-73z" stroke="#aaa9a7" />
      <path d={ticks.join("")} stroke="#a5a4a2" />
      <path d={stops.join("")} stroke="#8a8987" />
      {[1, 2, 3, 4, 5, 6, 7].map((n) => <TickLabel key={n} x={77 + n * 95.8} y="13.500">{n}</TickLabel>)}
      <path d="M71.500 .5h10v3l-5 5-5-5zM71.500 18.500h10v-3l-5-5-5 5zM737.500 18.500h9v-3l-4.500-5-4.500 5z" fill="#fff" stroke="#777" />
    </Svg>
  );
}
function VerticalRuler() {
  const ticks = [];
  for (let i = 0; i < 37; i++) {
    const y = 7.5 + i * 12;
    const k = (i - 6 + 80) % 8;
    if (k === 0) ticks.push(`M0 ${y}h2M15 ${y}h2`);
    else ticks.push(k === 4 ? `M4 ${y}h8` : `M5 ${y}h5`);
  }
  return (
    <Svg s={17} h={445}>
      <path d="M0 0h17v445H0z" fill="#fff" />
      <path d={ticks.join("")} stroke="#a5a4a2" />
      {[4, 5, 6, 7].map((n) => (
        <g key={n} transform={`translate(13 ${79.500 + (n - 4) * 96}) rotate(-90)`}><TickLabel>{n}</TickLabel></g>
      ))}
    </Svg>
  );
}

/* ---------- sections ---------- */
function TopPanel() {
  return (
    <Panel>
      <Fit w={131} size={14} weight={700}>LibreOffice Writer</Fit>
      <Tray>
        <Svg s={20} h={16}>
          <path d="M1 6q9-7 18 0" stroke="#85837c" strokeWidth="1.800" />
          <path d="M4 9q6-5 12 0" stroke="#aaa89f" strokeWidth="1.800" />
          <path d="M7 12q3-2.500 6 0" stroke="#dfdbd2" strokeWidth="1.800" />
          <path d="M8 13h4l-2 2z" fill="#dfdbd2" />
        </Svg>
        <LangBadge>En</LangBadge>
        <Svg s={9} h={16}><path d="M1 4.500l7 7-3.500 3.500V1L8 4.500l-7 7" stroke="#dfdbd2" strokeWidth="1.200" /></Svg>
        <Slot $ml={14}>
          <Svg s={25} h={14}>
            <rect x=".7" y="1.500" width="20.500" height="11" rx="1.500" stroke="#dfdbd2" strokeWidth="1.300" />
            <path d="M3 3.500h16v7H3zM22 4h2v6h-2z" fill="#dfdbd2" />
          </Svg>
        </Slot>
        <Fit w={38} ml={3} size={13.500}>(97%)</Fit>
        <Slot $ml={12}>
          <Svg s={21} h={16}>
            <path d="M0 5h3l4-4v14l-4-4H0z" fill="#dfdbd2" />
            <path d="M9.500 5q2 3 0 6" stroke="#dfdbd2" strokeWidth="1.500" />
            <path d="M12.500 3q4 5 0 10M16 1q5.500 7 0 14" stroke="#85837c" strokeWidth="1.500" />
          </Svg>
        </Slot>
        <Fit w={62} ml={11} size={14}>11:00 AM</Fit>
        <Slot $ml={13}>
          <Svg s={17} h={18}>
            <path d="M5.200 4.200a5.800 5.800 0 1 0 6.600 0" stroke="#dfdbd2" strokeWidth="2" />
            <path d="M8.500 2v7" stroke="#dfdbd2" strokeWidth="2" />
            <path d="M2.800 5L1 3.600M14.200 5L16 3.600M2.200 9H0M14.800 9H17M3.800 13.500L2 15.300M13.200 13.500L15 15.300M8.500 15v2.500" stroke="#dfdbd2" strokeWidth="2.200" />
          </Svg>
        </Slot>
      </Tray>
    </Panel>
  );
}

function Launcher() {
  return (
    <LauncherBar>
      <Ghost>{ghostText}</Ghost>
      {launcherItems.map((it) => (
        <Tile key={it.art} $bg={it.bg} $push={it.push} $glow={it.glow}>
          {launcherArt[it.art]}
          {it.pip && <Pip $color={it.pipColor} />}
          {it.double && <><Pip $thin $top={20} /><Pip $thin $top={25} /></>}
          {it.active && <Pip $right />}
        </Tile>
      ))}
    </LauncherBar>
  );
}

const Cross = () => <Svg s={10}><path d="M1.500 1.500l7 7M8.500 1.500l-7 7" stroke="#77706c" strokeWidth="1.700" /></Svg>;

function Browser() {
  return (
    <>
      <TabStrip>
        <Tab $active>
          <Svg s={14}><path d="M2.500.5h6l3 3v10h-9zM8 .5v3.500h3.500" fill="#fff" stroke="#666" strokeWidth="1.200" /></Svg>
          <TabTitle><Fit w={139} size={14.500}>https://blackboard.r</Fit></TabTitle>
          <Slot $ml={6}><Cross /></Slot>
        </Tab>
        <Tab>
          <Slot $ml={-4}>
            <Svg s={14} h={12}>
              <path d="M0 0h14v12H0z" fill="#f4f4f4" />
              <path d="M1.200 12V1.500L7 6.500l5.800-5V12" stroke="#d6402f" strokeWidth="2.300" />
            </Svg>
          </Slot>
          <TabTitle><Fit w={141} ml={1} size={14.500}>Inbox (1,739) - osel7c</Fit></TabTitle>
          <Slot $ml={7}><Cross /></Slot>
        </Tab>
        <NewTab />
        <UserButton>
          <Svg s={10}><circle cx="5" cy="2.800" r="2.300" fill="#c9c7c1" /><path d="M.5 9V7.500Q.5 5.500 3 5.500h4q2.500 0 2.500 2V9z" fill="#c9c7c1" /></Svg>
        </UserButton>
      </TabStrip>
      <NavBar>
        <Svg s={14} h={20}><path d="M11 2L4 10l7 8" stroke="#d0cfcd" strokeWidth="3.500" /></Svg>
        <Slot $ml={17}><Svg s={14} h={20}><path d="M3 2l7 8-7 8" stroke="#d0cfcd" strokeWidth="3.500" /></Svg></Slot>
        <Slot $ml={10}>
          <Svg s={22} h={20}>
            <path d="M17.500 13a7 7 0 1 1-1-7.500" stroke="#639bd5" strokeWidth="3.600" />
            <path d="M20 1v8h-8z" fill="#639bd5" />
          </Svg>
        </Slot>
        <UrlBox>
          <Svg s={13} h={18}>
            <path d="M3 8V5a3.500 3.500 0 0 1 7 0V8" stroke="#8a8a8a" strokeWidth="1.800" />
            <rect x="1.500" y="7.500" width="10" height="9" rx="1" fill="#8fd468" stroke="#4c9c2b" />
          </Svg>
          <Fit w={36} ml={6} size={16.300} color="#149414">https</Fit>
          <Fit w={17} size={16.300} color="#999">://</Fit>
          <Fit w={185} size={16.300} color="#2b2b2b">blackboard.newhaven.edu</Fit>
          <Fit w={629} size={16.300} color="#999">/bbcswebdav/pid-757122-dt-content-rid-3615146_1/courses/CSCI-6634-01-S16/hw3.pdf</Fit>
          <Slot $ml={238}>
            <Svg s={16}><circle cx="6.500" cy="6.500" r="5.500" stroke="#7a7a7a" strokeWidth="1.700" /><path d="M4 6.500h5M6.500 4v5" stroke="#7a7a7a" /><path d="M10.500 10.500l4.500 4.500" stroke="#7a7a7a" strokeWidth="2.500" /></Svg>
          </Slot>
          <Slot $ml={5}>
            <Svg s={19}><path d="M9.500 1.500l2.500 5.300 5.800.7-4.300 4 1.200 5.800-5.200-2.900-5.200 2.900 1.200-5.800-4.300-4 5.800-.7z" stroke="#7a7a7a" strokeWidth="1.300" strokeLinejoin="round" /></Svg>
          </Slot>
        </UrlBox>
        <Slot $ml={8}><Svg s={14} h={14}><path d="M1.500 2h11M1.500 7h11M1.500 12h11" stroke="#5a5a5a" strokeWidth="3" strokeLinecap="round" /></Svg></Slot>
      </NavBar>
      <Viewer>
        <PdfPage>
          <PdfLine $h={24}><Fit w={51} size={20.500}>exam.</Fit></PdfLine>
          <PdfLine $h={8} $pl={77}>
            <Fit w={950} size={20.500}>the relation chart one of each is and is an advantage section to make a common use of and about every</Fit>
          </PdfLine>
        </PdfPage>
        <BrowserScroll>
          <Caret $up />
          <BrowserThumb />
          <Caret />
        </BrowserScroll>
      </Viewer>
    </>
  );
}

function StandardBar() {
  return (
    <Toolbar $h={39}>
      <Grip />
      <Icon name="newDoc" ml={10} /><Drop $ml={9} />
      <Icon name="open" ml={9} /><Drop $ml={10} />
      <Icon name="save" ml={10} />
      <Icon name="mail" ml={10} />
      <Sep $ml={7} />
      <Pressed $ml={4}><Icon name="edit" /></Pressed>
      <Sep $ml={4} />
      <Icon name="pdf" ml={6} />
      <Icon name="print" ml={9} />
      <Icon name="preview" ml={9} />
      <Sep $ml={8} />
      <Icon name="spell" ml={7} />
      <Pressed $ml={6}><Icon name="autoSpell" /></Pressed>
      <Sep $ml={3} />
      <Icon name="cut" ml={7} />
      <Icon name="copy" ml={9} />
      <Icon name="paste" ml={8} /><Drop $ml={10} />
      <Icon name="brush" ml={10} />
      <Sep $ml={8} />
      <Icon name="undo" ml={5} /><Drop $ml={11} />
      <Icon name="redo" ml={10} /><Drop $ml={9} $off />
      <Sep $ml={9} />
      <Icon name="link" ml={6} />
      <Icon name="table" ml={9} /><Drop $ml={10} />
      <Icon name="draw" ml={10} />
      <Sep $ml={8} />
      <Icon name="navigator" ml={7} />
      <Icon name="gallery" ml={9} />
      <Icon name="pilcrow" ml={9} />
      <Sep $ml={8} />
      <Icon name="help" ml={7} />
    </Toolbar>
  );
}

function Field({ w, ml, children }) {
  return (
    <Combo $w={w} $ml={ml}>
      {children}
      <ComboButton><Caret $color="#777" /></ComboButton>
    </Combo>
  );
}

function FormatBar() {
  return (
    <Toolbar $h={39}>
      <Grip />
      <Icon name="styles" ml={10} />
      <Sep $ml={8} />
      <Field w={129} ml={4}><Fit w={89} size={14.500}>Default Style</Fit></Field>
      <Sep $ml={4} />
      <Field w={156} ml={4}><Fit w={33} ml={1} size={15} italic>Arial</Fit></Field>
      <Sep $ml={4} />
      <Field w={66} ml={4}><Fit w={16} size={14.500}>12</Fit></Field>
      <Sep $ml={4} />
      <Icon name="bold" ml={7} />
      <Icon name="italic" ml={9} />
      <Icon name="underline" ml={9} />
      <Sep $ml={8} />
      <Pressed $ml={4}><AlignFrame d={alignLeft} /></Pressed>
      <Slot $ml={4}><AlignFrame d={alignCenter} /></Slot>
      <Slot $ml={9}><AlignFrame d={alignRight} /></Slot>
      <Slot $ml={9}><AlignFrame d={alignFull} /></Slot>
      <Sep $ml={8} />
      <Slot $ml={7}>
        <AlignFrame d="M11 6.500h4M16 6.500h2M11 9.500h6M11 13.500h3M15 13.500h4M11 16.500h5">
          <text x="4.500" y="10" fontFamily="Noto Sans" fontWeight="700" fontSize="7" fill="#2d5fa4">1</text>
          <text x="4.500" y="18.500" fontFamily="Noto Sans" fontWeight="700" fontSize="7" fill="#2d5fa4">2</text>
        </AlignFrame>
      </Slot>
      <Slot $ml={9}>
        <AlignFrame d="M6 6.500h2M11 6.500h4M16 6.500h4M11 9.500h7M12 13.500h8M14 17.500h5">
          <path d="M.5 7.500v12h12z" fill="#f2cf3a" stroke="#b8920c" />
          <path d="M3.500 13.500v3H6.500z" fill="#fff" stroke="#b8920c" />
        </AlignFrame>
      </Slot>
      <Slot $ml={9}>
        <AlignFrame d="M11 8.500h9M11 11.500h8M11 14.500h6"><path d="M9 6v12l-6-6z" fill="#1f549d" /></AlignFrame>
      </Slot>
      <Slot $ml={9}>
        <AlignFrame d="M12 8.500h8M12 11.500h8M12 14.500h5"><path d="M5 6v12l6-6z" fill="#1f549d" /></AlignFrame>
      </Slot>
      <Sep $ml={8} />
      <Icon name="fontColor" ml={6} /><Drop $ml={10} />
      <Icon name="highlight" ml={10} /><Drop $ml={9} />
      <Icon name="paraBg" ml={9} /><Drop $ml={10} />
    </Toolbar>
  );
}

function Document() {
  return (
    <Page>
      <Line><Fit w={646} size={16}>2. (a) Essentially, if k is reused, which could be identified by identical r value of two different</Fit></Line>
      <Line><Fit w={632} size={16}>messages, k could be recovered by the known s and H pairs. If k is recovered, x could be</Fit></Line>
      <Line $gap><Fit w={406} size={16}>recovered. Then the particular digital signature is hacked.</Fit></Line>
      <Line $gap><Fit w={20} size={16}>(b)</Fit><Fit w={220} ml={17} size={16}>Since k is reused, r is identical.</Fit></Line>
      <Line>
        <Fit w={8} size={16}>s</Fit><Sub $w={8}>1</Sub><Fit w={173} size={16}>k = [ H(M1) + x r ] mod q</Fit><Fit w={21} ml={31} size={16}>(1)</Fit>
      </Line>
      <Line $gap>
        <Fit w={8} size={16}>s</Fit><Sub $w={8}>2</Sub><Fit w={173} size={16}>k = [ H(M2) + x r ] mod q</Fit><Fit w={21} ml={31} size={16}>(2)</Fit>
      </Line>
      <Line $gap><Fit w={58} size={16}>(1) – (2)</Fit></Line>
      <Line $gap>
        <Fit w={18} size={16}>( s</Fit><Sub $w={13}>12</Sub><Fit w={18} size={16}>- s</Fit><Sub $w={7}>2</Sub><Fit w={197} size={16}>) k= [H(M1) – H(M2)] mod q</Fit>
      </Line>
      <Line $gap>
        <Fit w={173} size={16}>k = [H(M1) – H(M2)] / ( s</Fit><Sub $w={8}>1</Sub><Fit w={18} size={16}>- s</Fit><Sub $w={7}>2</Sub><Fit w={6} size={16}>)</Fit><Fit w={45} ml={17} size={16}>mod q</Fit>
      </Line>
      <Line $gap><Fit w={32} size={16}>k = (</Fit></Line>
      <Line><Fit w={13} size={16}>3.</Fit></Line>
      <TextCursor />
    </Page>
  );
}

function FindBar() {
  return (
    <Toolbar $h={40}>
      <Grip />
      <Slot $ml={12}>
        <Svg s={21}><path d="M3 4l15 13M18 4L3 17" stroke="#484846" strokeWidth="6" /><path d="M3.500 4.500l14 12M17.500 4.500l-14 12" stroke="#686866" strokeWidth="4" /></Svg>
      </Slot>
      <Field w={248} ml={7}><Fit w={30} size={14.500} color="#8c8a88">Find</Fit></Field>
      <Slot $ml={8}><Svg s={18}><path d="M2 6l7 6 7-6" stroke="#cfcecc" strokeWidth="4" /></Svg></Slot>
      <Slot $ml={14}><Svg s={20} h={22}><path d="M10 21V6M2.500 10.500L10 3l7.500 7.500" stroke="#cfcecc" strokeWidth="4" /></Svg></Slot>
      <Fit w={41} ml={10} size={12}>Find All</Fit>
      <Check />
      <Fit w={78} ml={9} size={14.500}>Match Case</Fit>
      <Sep $ml={5} />
      <Icon name="find" ml={8} />
    </Toolbar>
  );
}

function Status() {
  return (
    <StatusBar>
      <Fit w={54} ml={10} size={12}>Page 1 / 1</Fit>
      <Sep $ml={57} $h={18} />
      <Fit w={151} ml={8} size={12}>207 words, 1074 characters</Fit>
      <Sep $ml={85} $h={18} />
      <Fit w={72} ml={7} size={12}>Default Style</Fit>
      <Sep $ml={58} $h={18} />
      <Fit w={72} ml={33} size={12}>English (USA)</Fit>
      <Sep $ml={31} $h={18} />
      <Sep $ml={66} $h={18} />
      <Slot $ml={6}><Svg s={14} h={14}><path d="M1 4h8v6H1z" fill="#8a8a88" /><path d="M10 1.500h3M10 12.500h3M11.500 2v10" stroke="#8a8a88" /></Svg></Slot>
      <Sep $ml={6} $h={18} />
      <Slot $ml={6}>
        <Svg s={16}>
          <path d="M1.500 1.500h8l4 4v9h-12z" fill="#fff" stroke="#7d7de0" />
          <path d="M9.500 1.500v4h4M8 8.500h4M8 10.500h4M8 12.500h4" stroke="#7d7de0" />
          <path d="M3.500 1.500h4l-1 8.500h-2zM4 11.500h3V14H4z" fill="#e81313" />
        </Svg>
      </Slot>
      <Sep $ml={6} $h={18} />
      <Sep $ml={27} $h={18} />
      <Sep $ml={174} $h={18} />
      <Slot $ml={11}>
        <Svg s={56} h={12}>
          <path d="M.7 1.500h5l2.500 2.500v7H.7zM5 1.500V5h3" stroke="#8a8a88" />
          <path d="M14.500 1.500h5l2.500 2.500v7h-7.500zM19 1.500V5h3M24.500 1.500h5l2.500 2.500v7h-7.500zM29 1.500V5h3" stroke="#555" />
          <path d="M39 4l2.500-2.500h5V11H39zM46.500 1.500h5L54 4v7h-7.500M51 1.500V5h3M42 1.500V5h-3" stroke="#8a8a88" />
        </Svg>
      </Slot>
      <Sep $ml={7} $h={18} />
      <Slot $ml={9}>
        <Svg s={126} h={14}>
          <path d="M0 7h8M117 7h8M121 3v8" stroke="#777" strokeWidth="1.800" />
          <path d="M14 7h97M25.500 2v10" stroke="#b0afad" strokeWidth="1.600" />
          <circle cx="62" cy="7" r="3.800" fill="#fff" stroke="#777" strokeWidth="1.200" />
        </Svg>
      </Slot>
      <Sep $ml={6} $h={18} />
      <Fit w={31} ml={6} size={12}>100%</Fit>
    </StatusBar>
  );
}

function WriterWindow() {
  return (
    <Window>
      <TitleBar>
        <WinButton $close><Svg s={8}><path d="M1.500 1.500l5 5M6.500 1.500l-5 5" stroke="#45160a" strokeWidth="1.300" /></Svg></WinButton>
        <WinButton><Svg s={8}><path d="M1 4h6" stroke="#33322e" strokeWidth="1.300" /></Svg></WinButton>
        <WinButton><Svg s={8}><path d="M1.500 1.500h5v5h-5z" stroke="#33322e" strokeWidth="1.200" /></Svg></WinButton>
        <Fit w={249} ml={9} size={14} weight={700}>hw3-yxue2.odt - LibreOffice Writer</Fit>
      </TitleBar>
      <StandardBar />
      <FormatBar />
      <Workspace>
        <RulerRow>
          <Corner />
          <Slot $ml={204}><RulerPad><HorizontalRuler /></RulerPad></Slot>
        </RulerRow>
        <Canvas>
          <VerticalRuler />
          <Document />
        </Canvas>
        <ScrollColumn>
          <ScrollTrack>
            <Caret $up $color="#777" />
            <ScrollThumb><ThumbGrip /></ScrollThumb>
            <Caret $color="#777" />
          </ScrollTrack>
          <RoundButton><Svg s={7}><path d="M3.500 0L6 2.500H1zM3.500 3v2M1 5.500h5" fill="#333" stroke="#333" strokeWidth=".8" /></Svg></RoundButton>
          <RoundButton><Svg s={7}><path d="M1 7V4q2-3 6-4v4q-2 0-2 3z" fill="#35678f" /></Svg></RoundButton>
          <RoundButton><Svg s={7}><path d="M3.500 6L6 3.500H1zM3.500 1v2M1 1h5" fill="#333" stroke="#333" strokeWidth=".8" /></Svg></RoundButton>
        </ScrollColumn>
      </Workspace>
      <FindBar />
      <Status />
    </Window>
  );
}

export default function App() {
  return (
    <Screen>
      <GlobalStyle />
      <TopPanel />
      <Body>
        <Launcher />
        <Desktop>
          <Browser />
          <WriterWindow />
        </Desktop>
      </Body>
    </Screen>
  );
}
